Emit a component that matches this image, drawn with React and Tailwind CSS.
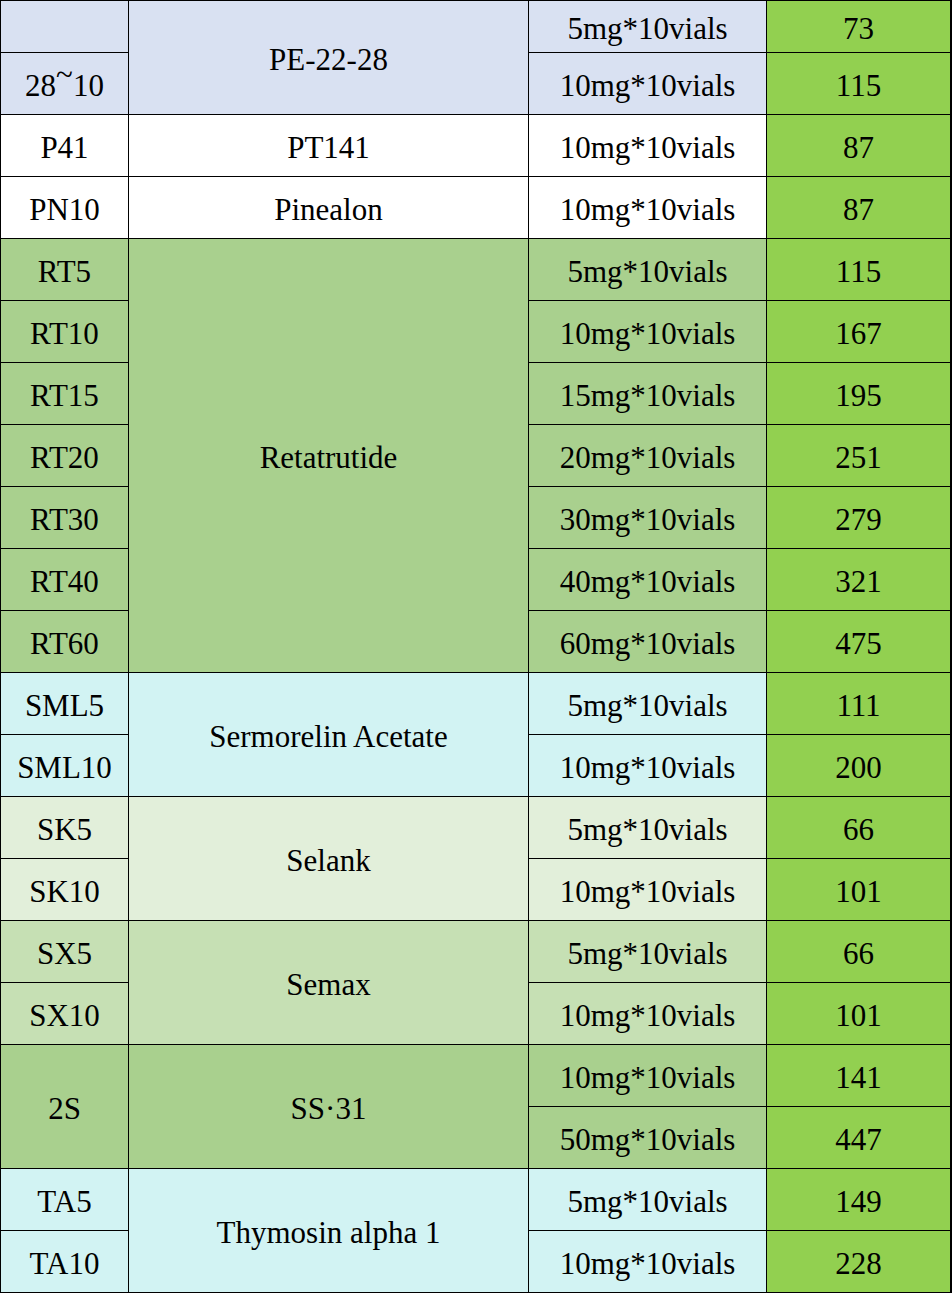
import React from 'react';

const PRICE = 'bg-[#92d050]';

const groups = [
  {
    bg: 'bg-[#d9e1f2]',
    name: 'PE-22-28',
    rows: [
      { code: '', spec: '5mg*10vials', price: '73' },
      { code: 'tilde', spec: '10mg*10vials', price: '115' },
    ],
  },
  { bg: 'bg-white', name: 'PT141', rows: [{ code: 'P41', spec: '10mg*10vials', price: '87' }] },
  { bg: 'bg-white', name: 'Pinealon', rows: [{ code: 'PN10', spec: '10mg*10vials', price: '87' }] },
  {
    bg: 'bg-[#a9d08e]',
    name: 'Retatrutide',
    rows: [
      { code: 'RT5', spec: '5mg*10vials', price: '115' },
      { code: 'RT10', spec: '10mg*10vials', price: '167' },
      { code: 'RT15', spec: '15mg*10vials', price: '195' },
      { code: 'RT20', spec: '20mg*10vials', price: '251' },
      { code: 'RT30', spec: '30mg*10vials', price: '279' },
      { code: 'RT40', spec: '40mg*10vials', price: '321' },
      { code: 'RT60', spec: '60mg*10vials', price: '475' },
    ],
  },
  {
    bg: 'bg-[#d2f3f3]',
    name: 'Sermorelin Acetate',
    rows: [
      { code: 'SML5', spec: '5mg*10vials', price: '111' },
      { code: 'SML10', spec: '10mg*10vials', price: '200' },
    ],
  },
  {
    bg: 'bg-[#e2efda]',
    name: 'Selank',
    rows: [
      { code: 'SK5', spec: '5mg*10vials', price: '66' },
      { code: 'SK10', spec: '10mg*10vials', price: '101' },
    ],
  },
  {
    bg: 'bg-[#c6e0b4]',
    name: 'Semax',
    rows: [
      { code: 'SX5', spec: '5mg*10vials', price: '66' },
      { code: 'SX10', spec: '10mg*10vials', price: '101' },
    ],
  },
  {
    bg: 'bg-[#a9d08e]',
    name: 'SS·31',
    mergedCode: '2S',
    rows: [
      { spec: '10mg*10vials', price: '141' },
      { spec: '50mg*10vials', price: '447' },
    ],
  },
  {
    bg: 'bg-[#d2f3f3]',
    name: 'Thymosin alpha 1',
    rows: [
      { code: 'TA5', spec: '5mg*10vials', price: '149' },
      { code: 'TA10', spec: '10mg*10vials', price: '228' },
    ],
  },
];

const spanClass = { 1: 'row-span-1', 2: 'row-span-2', 7: 'row-span-7' };

const Cell = ({ className = '', children }) => (
  <div className={`flex items-center justify-center pt-[3px] ${className}`}>{children}</div>
);

const codeLabel = (code) =>
  code === 'tilde' ? (
    <span>
      28<span className="relative -top-[11px]">~</span>10
    </span>
  ) : (
    code
  );

export default function App() {
  const cells = [];
  groups.forEach((g, gi) => {
    const span = spanClass[g.rows.length];
    g.rows.forEach((r, ri) => {
      if (g.mergedCode) {
        if (ri === 0) {
          cells.push(<Cell key={`${gi}-c`} className={`${g.bg} ${span}`}>{g.mergedCode}</Cell>);
        }
      } else {
        cells.push(<Cell key={`${gi}-${ri}-c`} className={g.bg}>{codeLabel(r.code)}</Cell>);
      }
      if (ri === 0) {
        cells.push(<Cell key={`${gi}-n`} className={`${g.bg} ${span}`}>{g.name}</Cell>);
      }
      cells.push(<Cell key={`${gi}-${ri}-s`} className={g.bg}>{r.spec}</Cell>);
      cells.push(<Cell key={`${gi}-${ri}-p`} className={PRICE}>{r.price}</Cell>);
    });
  });

  return (
    <div className="w-[952px] h-[1293px] bg-white">
      <div className="grid grid-cols-[127px_399px_237px_183px] grid-rows-[51px_repeat(20,61px)] gap-px bg-black pt-px pl-px pr-[2px] pb-px font-['Liberation_Serif','Times_New_Roman',serif] text-[31px] leading-none text-black">
        {cells}
      </div>
    </div>
  );
}
